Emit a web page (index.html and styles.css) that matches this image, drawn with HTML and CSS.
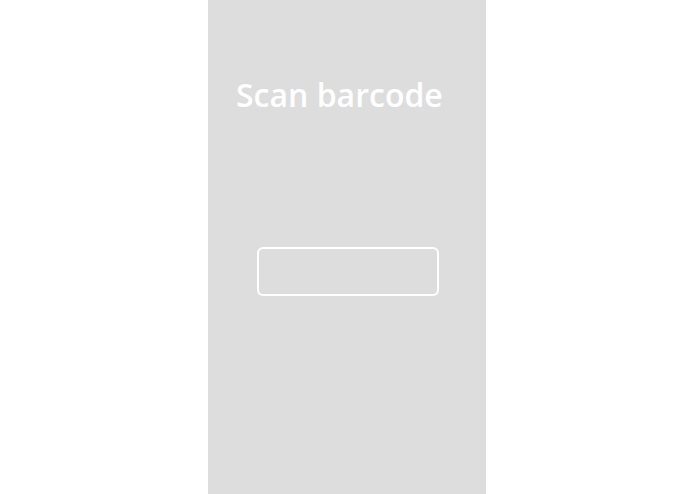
FILE: index.html
```html
<!DOCTYPE html>
<html lang="en">
<head>
    <meta charset="UTF-8">
    <meta name="viewport" content="width=device-width, initial-scale=1.0">
    <title>Scan barcode</title>
    <link rel="stylesheet" href="styles.css">
</head>
<body>

<div class="screen">
    <h1 class="title">Scan barcode</h1>
    <div class="scan-frame"></div>
</div>

</body>
</html>
```

FILE: styles.css
```css
/* General Styles */
html, body {
    height: 100%;
}
body {
    margin: 0;
    padding: 0;
    background-color: #ffffff;
    font-family: "Open Sans", Arial, sans-serif;
}
.screen {
    width: 278px;
    height: 100%;
    margin-left: 208px;
    background-color: #dddddd;
    display: flex;
    flex-direction: column;
}
.title {
    margin: 73px 0 0 28px;
    color: #ffffff;
    font-size: 32px;
    font-weight: 600;
    line-height: 44px;
}
.scan-frame {
    margin: 130px 0 0 49px;
    width: 178px;
    height: 45px;
    border: 2px solid #ffffff;
    border-radius: 6px;
}
```
